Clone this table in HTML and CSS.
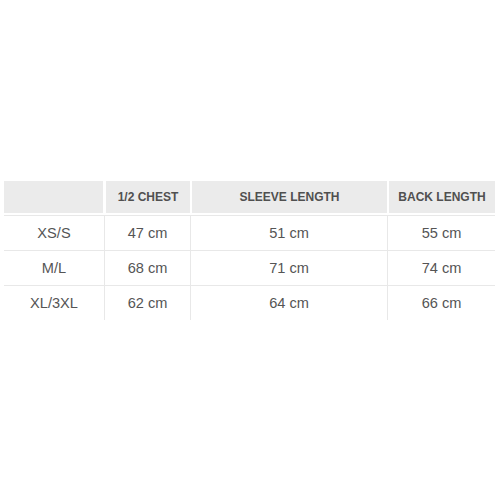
FILE: index.html
```html
<!DOCTYPE html>
<html>
<head>
<meta charset="utf-8">
<link rel="stylesheet" href="styles.css">
</head>
<body>
<div class="chart">
  <div class="row head">
    <div class="cell"></div>
    <div class="cell">1/2 Chest</div>
    <div class="cell">Sleeve Length</div>
    <div class="cell">Back Length</div>
  </div>
  <div class="row body">
    <div class="cell">XS/S</div>
    <div class="cell">47 cm</div>
    <div class="cell">51 cm</div>
    <div class="cell">55 cm</div>
  </div>
  <div class="row body">
    <div class="cell">M/L</div>
    <div class="cell">68 cm</div>
    <div class="cell">71 cm</div>
    <div class="cell">74 cm</div>
  </div>
  <div class="row body">
    <div class="cell">XL/3XL</div>
    <div class="cell">62 cm</div>
    <div class="cell">64 cm</div>
    <div class="cell">66 cm</div>
  </div>
</div>
</body>
</html>
```
FILE: styles.css
```css
html, body {
  margin: 0;
  padding: 0;
  background: #fff;
}
body {
  font-family: "Liberation Sans", Arial, sans-serif;
  color: #555;
}
.chart {
  width: 491px;
  margin: 181px 0 0 4px;
}
.row {
  display: grid;
  grid-template-columns: 100px 86px 197px 108px;
  box-sizing: border-box;
}
.head {
  height: 32px;
  margin-bottom: 2px;
}
.head .cell {
  background: #ebebeb;
  font-size: 12px;
  font-weight: bold;
  text-transform: uppercase;
  display: flex;
  align-items: center;
  justify-content: center;
  color: #505050;
}
.head .cell:not(:first-child) {
  border-left: 2px solid #fff;
}
.head .cell:first-child {
  margin-right: 1px;
}
.body {
  height: 35px;
  border-top: 1px solid #e8e8e8;
}
.body .cell {
  font-size: 14.6px;
  display: flex;
  align-items: center;
  justify-content: center;
  padding-bottom: 1px;
  color: #555;
}
.body .cell:not(:first-child) {
  border-left: 1px solid #e8e8e8;
}
```
